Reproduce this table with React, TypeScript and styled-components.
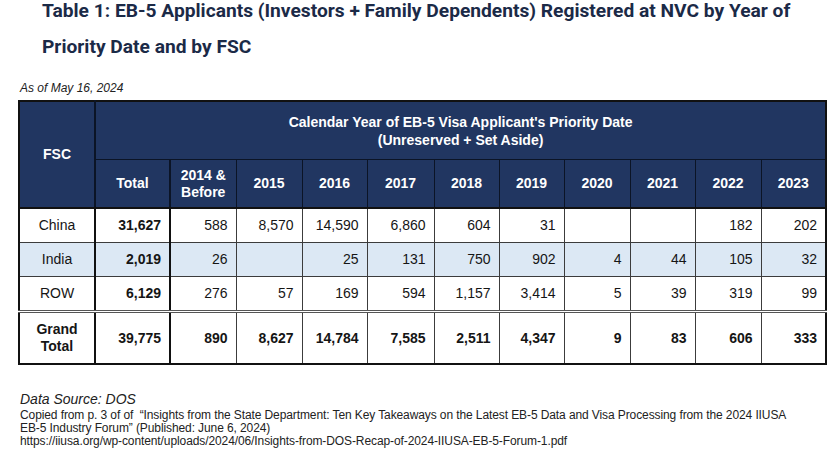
import React from 'react'
import styled, { createGlobalStyle } from 'styled-components'

const GlobalStyle = createGlobalStyle`
  html, body {
    margin: 0;
    padding: 0;
    background: #ffffff;
  }
`

const NAVY = '#213661'
const STRIPE = '#dce8f4'

type Row = { fsc: string; total: string; years: string[]; striped?: boolean }

const yearHeads = ['2014 & Before', '2015', '2016', '2017', '2018', '2019', '2020', '2021', '2022', '2023']
const colWidths = [76, 75, 66, 66, 65, 67, 65, 65, 66, 65, 66, 65]

const rows: Row[] = [
    { fsc: 'China', total: '31,627', years: ['588', '8,570', '14,590', '6,860', '604', '31', '', '', '182', '202'] },
    { fsc: 'India', total: '2,019', years: ['26', '', '25', '131', '750', '902', '4', '44', '105', '32'], striped: true },
    { fsc: 'ROW', total: '6,129', years: ['276', '57', '169', '594', '1,157', '3,414', '5', '39', '319', '99'] },
]

const grandTotal = ['890', '8,627', '14,784', '7,585', '2,511', '4,347', '9', '83', '606', '333']

const Page = styled.div`
    width: 832px;
    height: 454px;
    padding: 0 7px 0 18px;
    box-sizing: border-box;
    overflow: hidden;
`

const Title = styled.h1`
    margin: -7px 0 0 0;
    padding-left: 24px;
    font-family: Roboto, "Liberation Sans", sans-serif;
    font-weight: 700;
    font-size: 19.2px;
    line-height: 36px;
    color: #1b2a47;
    white-space: nowrap;
`

const AsOf = styled.div`
    margin: 16px 0 0 2px;
    font-family: "Liberation Sans", Arial, sans-serif;
    font-style: italic;
    font-size: 12px;
    line-height: 14px;
    color: #222;
`

const DataTable = styled.table`
    margin-top: 5px;
    width: 807px;
    table-layout: fixed;
    border-collapse: collapse;
    border: 2px solid #111;
    font-family: "Liberation Sans", Arial, sans-serif;
    font-size: 14px;
    color: #151515;
`

const HeadCell = styled.th<{ $thickRight?: boolean }>`
    background: ${NAVY};
    color: #ffffff;
    font-weight: 700;
    text-align: center;
    vertical-align: middle;
    line-height: 17px;
    padding: 0 4px;
    border: 1px solid #0b1426;
    border-right-width: ${p => (p.$thickRight ? '2px' : '1px')};
`

const SpanCell = styled(HeadCell)`
    height: 57px;
    line-height: 18px;
`

const YearCell = styled(HeadCell)`
    height: 47px;
    border-bottom: 2px solid #111;
`

const BodyRow = styled.tr<{ $striped?: boolean }>`
    background: ${p => (p.$striped ? STRIPE : '#ffffff')};
`

const TotalRow = styled.tr`
    background: #ffffff;
    td {
        border-top: 3px double #555;
        height: 50px;
        font-weight: 700;
    }
`

const Cell = styled.td<{ $bold?: boolean; $center?: boolean; $thickRight?: boolean }>`
    height: 33px;
    padding: 0 8px;
    text-align: ${p => (p.$center ? 'center' : 'right')};
    font-weight: ${p => (p.$bold ? 700 : 400)};
    border: 1px solid #3c3c3c;
    border-right-width: ${p => (p.$thickRight ? '2px' : '1px')};
    border-right-color: ${p => (p.$thickRight ? '#111' : '#3c3c3c')};
    line-height: 17px;
`

const Footer = styled.div`
    margin: 26px 0 0 2px;
    font-family: "Liberation Sans", Arial, sans-serif;
    color: #222;
`

const SourceTitle = styled.div`
    font-style: italic;
    font-size: 14px;
    line-height: 16px;
`

const Note = styled.p`
    margin: 2px 0 0 0;
    font-size: 12px;
    line-height: 13px;
    letter-spacing: -0.1px;
    white-space: nowrap;
`

const App = () => {
    return (
        <>
            <GlobalStyle />
            <Page>
                <Title>
                    Table 1: EB-5 Applicants (Investors + Family Dependents) Registered at NVC by Year of
                    <br />
                    Priority Date and by FSC
                </Title>
                <AsOf>As of May 16, 2024</AsOf>
                <DataTable>
                    <colgroup>
                        {colWidths.map((w, i) => (
                            <col key={i} style={{ width: w }} />
                        ))}
                    </colgroup>
                    <thead>
                        <tr>
                            <HeadCell rowSpan={2} $thickRight style={{ borderBottom: '2px solid #111' }}>FSC</HeadCell>
                            <SpanCell colSpan={11}>
                                Calendar Year of EB-5 Visa Applicant's Priority Date
                                <br />
                                (Unreserved + Set Aside)
                            </SpanCell>
                        </tr>
                        <tr>
                            <YearCell $thickRight>Total</YearCell>
                            {yearHeads.map(y => (
                                <YearCell key={y}>
                                    {y === '2014 & Before' ? <>2014 &amp;<br />Before</> : y}
                                </YearCell>
                            ))}
                        </tr>
                    </thead>
                    <tbody>
                        {rows.map(r => (
                            <BodyRow key={r.fsc} $striped={r.striped}>
                                <Cell $center $thickRight>{r.fsc}</Cell>
                                <Cell $bold $thickRight>{r.total}</Cell>
                                {r.years.map((v, i) => (
                                    <Cell key={i}>{v}</Cell>
                                ))}
                            </BodyRow>
                        ))}
                        <TotalRow>
                            <Cell $center $thickRight>Grand<br />Total</Cell>
                            <Cell $thickRight>39,775</Cell>
                            {grandTotal.map((v, i) => (
                                <Cell key={i}>{v}</Cell>
                            ))}
                        </TotalRow>
                    </tbody>
                </DataTable>
                <Footer>
                    <SourceTitle>Data Source: DOS</SourceTitle>
                    <Note>
                        Copied from p. 3 of of &nbsp;“Insights from the State Department: Ten Key Takeaways on the Latest EB-5 Data and Visa Processing from the 2024 IIUSA
                        <br />
                        EB-5 Industry Forum” (Published: June 6, 2024)
                        <br />
                        https://iiusa.org/wp-content/uploads/2024/06/Insights-from-DOS-Recap-of-2024-IIUSA-EB-5-Forum-1.pdf
                    </Note>
                </Footer>
            </Page>
        </>
    )
}

export default App
